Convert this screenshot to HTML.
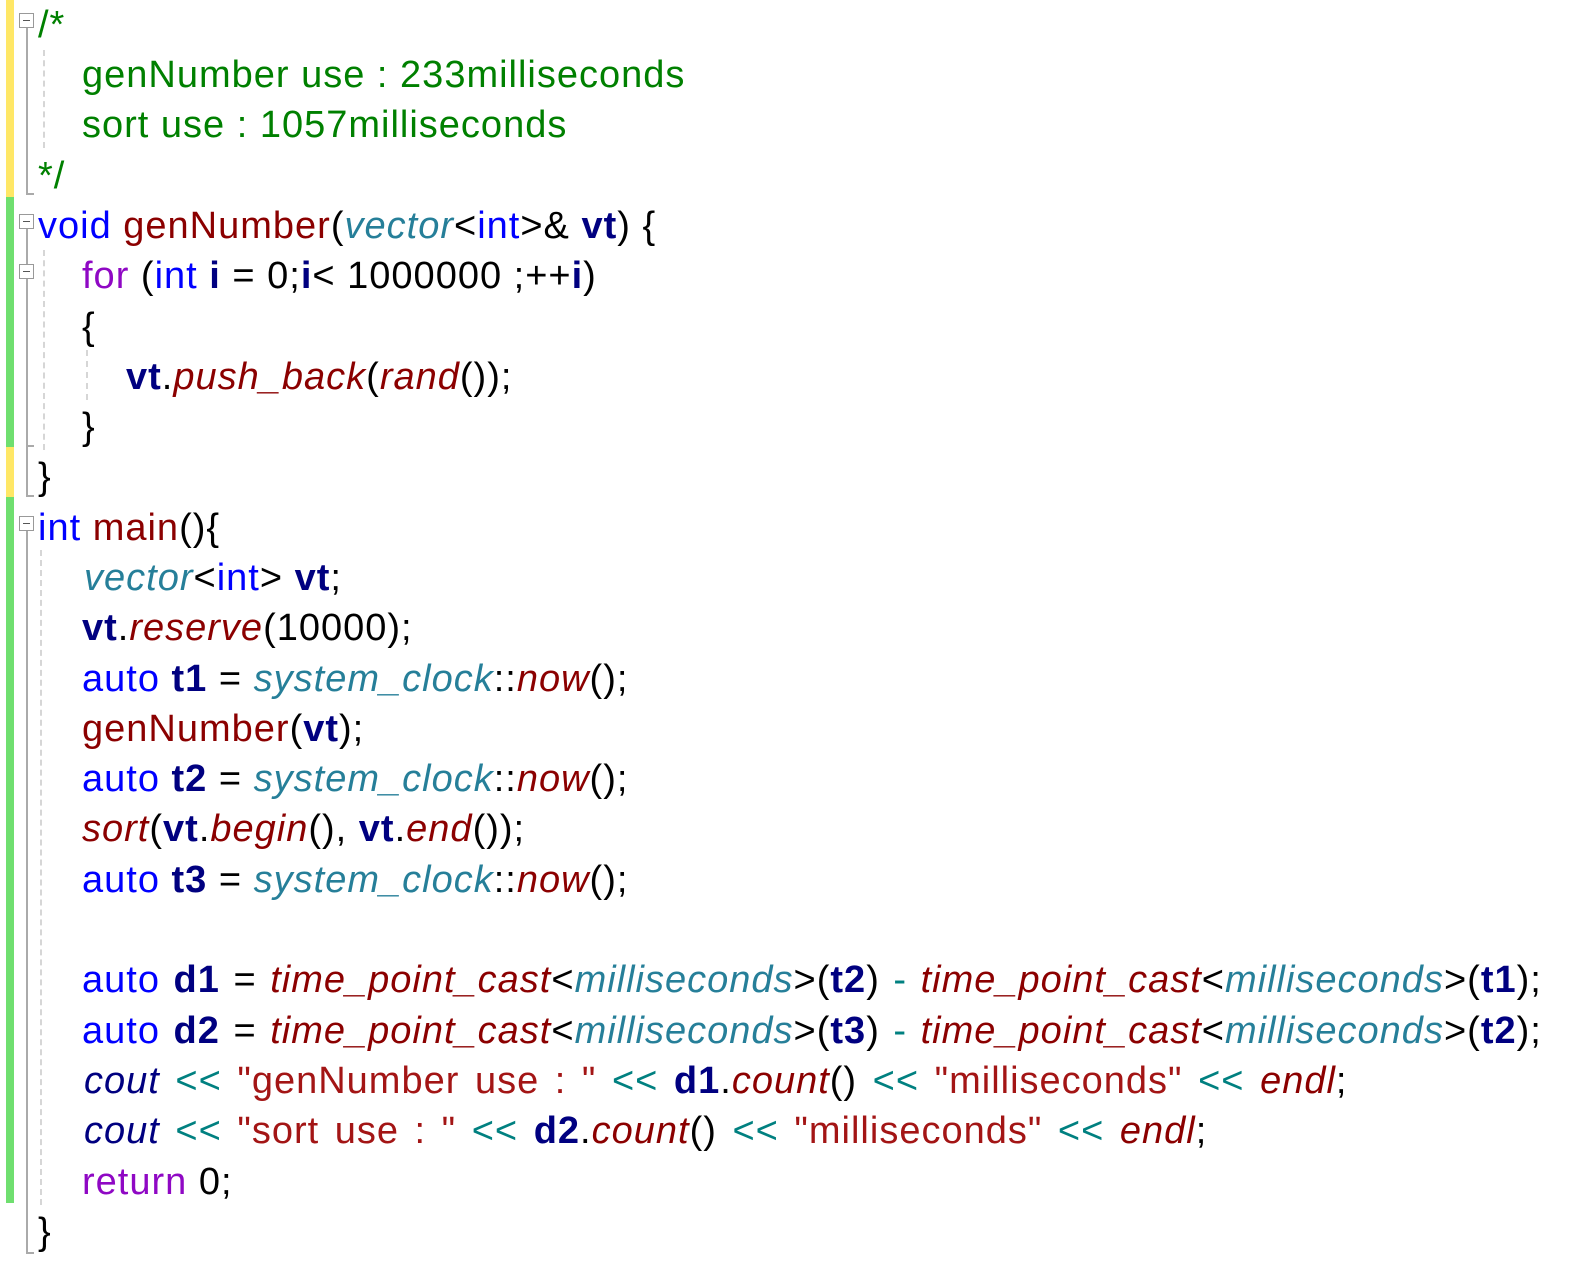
<!DOCTYPE html>
<html><head><meta charset="utf-8"><style>
html,body{margin:0;padding:0;background:#fff;width:1580px;height:1267px;overflow:hidden;position:relative}
.l{position:absolute;white-space:pre;font-family:"Liberation Sans","DejaVu Sans",sans-serif;font-size:38px;letter-spacing:1px;line-height:50px;color:#000}
.c{color:#008000}.k{color:#0000ff}.p{color:#8f08c4}.f{color:#8b0000}.fi{color:#8b0000;font-style:italic}
.v{color:#000080;font-weight:bold}.t{color:#267f99;font-style:italic}.o{color:#008080}.s{color:#a31515}.ci{color:#000080;font-style:italic}
.bar{position:absolute;left:6px;width:8px}
.fb{position:absolute;left:19px;width:13px;height:13px;border:1px solid #999;background:#fff}
.fb:after{content:"";position:absolute;left:3px;right:3px;top:6px;height:1px;background:#555}
.vl{position:absolute;left:26px;width:2px;background:#aaa}
.hl{position:absolute;left:26px;width:8px;height:2px;background:#aaa}
.dg{position:absolute;width:0;border-left:2px dashed #d6d6d6}
</style></head><body>
<div class="bar" style="top:0;height:197px;background:#ffe766"></div>
<div class="bar" style="top:197px;height:250px;background:#6fdf6f"></div>
<div class="bar" style="top:447px;height:50px;background:#ffe766"></div>
<div class="bar" style="top:497px;height:706px;background:#6fdf6f"></div>

<div class="vl" style="top:28px;height:166px"></div><div class="hl" style="top:193px"></div>
<div class="vl" style="top:228px;height:268px"></div><div class="hl" style="top:445px"></div><div class="hl" style="top:495px"></div>
<div class="vl" style="top:530px;height:724px"></div><div class="hl" style="top:1252px"></div>
<div class="fb" style="top:13px"></div>
<div class="fb" style="top:214px"></div>
<div class="fb" style="top:264px"></div>
<div class="fb" style="top:516px"></div>

<div class="dg" style="left:43px;top:50px;height:98px"></div>
<div class="dg" style="left:43px;top:250px;height:200px"></div>
<div class="dg" style="left:86px;top:350px;height:50px"></div>
<div class="dg" style="left:40px;top:550px;height:655px"></div>

<div class="l" style="left:38px;top:0px"><span class="c">/*</span></div>
<div class="l" style="left:82px;top:50px"><span class="c">genNumber use : 233milliseconds</span></div>
<div class="l" style="left:82px;top:100px"><span class="c">sort use : 1057milliseconds</span></div>
<div class="l" style="left:38px;top:151px"><span class="c">*/</span></div>
<div class="l" style="left:38px;top:201px"><span class="k">void</span> <span class="f">genNumber</span>(<span class="t">vector</span>&lt;<span class="k">int</span>&gt;&amp; <span class="v">vt</span>) {</div>
<div class="l" style="left:82px;top:251px"><span class="p">for</span> (<span class="k">int</span> <span class="v">i</span> = 0;<span class="v">i</span>&lt; 1000000 ;++<span class="v">i</span>)</div>
<div class="l" style="left:82px;top:302px">{</div>
<div class="l" style="left:126px;top:352px"><span class="v">vt</span>.<span class="fi">push_back</span>(<span class="fi">rand</span>());</div>
<div class="l" style="left:82px;top:402px">}</div>
<div class="l" style="left:38px;top:452px">}</div>
<div class="l" style="left:38px;top:503px"><span class="k">int</span> <span class="f">main</span>(){</div>
<div class="l" style="left:84px;top:553px"><span class="t">vector</span>&lt;<span class="k">int</span>&gt; <span class="v">vt</span>;</div>
<div class="l" style="left:82px;top:603px"><span class="v">vt</span>.<span class="fi">reserve</span>(10000);</div>
<div class="l" style="left:82px;top:654px"><span class="k">auto</span> <span class="v">t1</span> = <span class="t">system_clock</span>::<span class="fi">now</span>();</div>
<div class="l" style="left:82px;top:704px"><span class="f">genNumber</span>(<span class="v">vt</span>);</div>
<div class="l" style="left:82px;top:754px"><span class="k">auto</span> <span class="v">t2</span> = <span class="t">system_clock</span>::<span class="fi">now</span>();</div>
<div class="l" style="left:82px;top:804px"><span class="fi">sort</span>(<span class="v">vt</span>.<span class="fi">begin</span>(), <span class="v">vt</span>.<span class="fi">end</span>());</div>
<div class="l" style="left:82px;top:855px"><span class="k">auto</span> <span class="v">t3</span> = <span class="t">system_clock</span>::<span class="fi">now</span>();</div>
<div class="l" style="left:82px;top:955px;word-spacing:2px"><span class="k">auto</span> <span class="v">d1</span> = <span class="fi">time_point_cast</span>&lt;<span class="t">milliseconds</span>&gt;(<span class="v">t2</span>) <span class="o">-</span> <span class="fi">time_point_cast</span>&lt;<span class="t">milliseconds</span>&gt;(<span class="v">t1</span>);</div>
<div class="l" style="left:82px;top:1006px;word-spacing:2px"><span class="k">auto</span> <span class="v">d2</span> = <span class="fi">time_point_cast</span>&lt;<span class="t">milliseconds</span>&gt;(<span class="v">t3</span>) <span class="o">-</span> <span class="fi">time_point_cast</span>&lt;<span class="t">milliseconds</span>&gt;(<span class="v">t2</span>);</div>
<div class="l" style="left:84px;top:1056px;word-spacing:4px"><span class="ci">cout</span> <span class="o">&lt;&lt;</span> <span class="s">"genNumber use : "</span> <span class="o">&lt;&lt;</span> <span class="v">d1</span>.<span class="fi">count</span>() <span class="o">&lt;&lt;</span> <span class="s">"milliseconds"</span> <span class="o">&lt;&lt;</span> <span class="fi">endl</span>;</div>
<div class="l" style="left:84px;top:1106px;word-spacing:4px"><span class="ci">cout</span> <span class="o">&lt;&lt;</span> <span class="s">"sort use : "</span> <span class="o">&lt;&lt;</span> <span class="v">d2</span>.<span class="fi">count</span>() <span class="o">&lt;&lt;</span> <span class="s">"milliseconds"</span> <span class="o">&lt;&lt;</span> <span class="fi">endl</span>;</div>
<div class="l" style="left:82px;top:1157px"><span class="p">return</span> 0;</div>
<div class="l" style="left:38px;top:1207px">}</div>
</body></html>
